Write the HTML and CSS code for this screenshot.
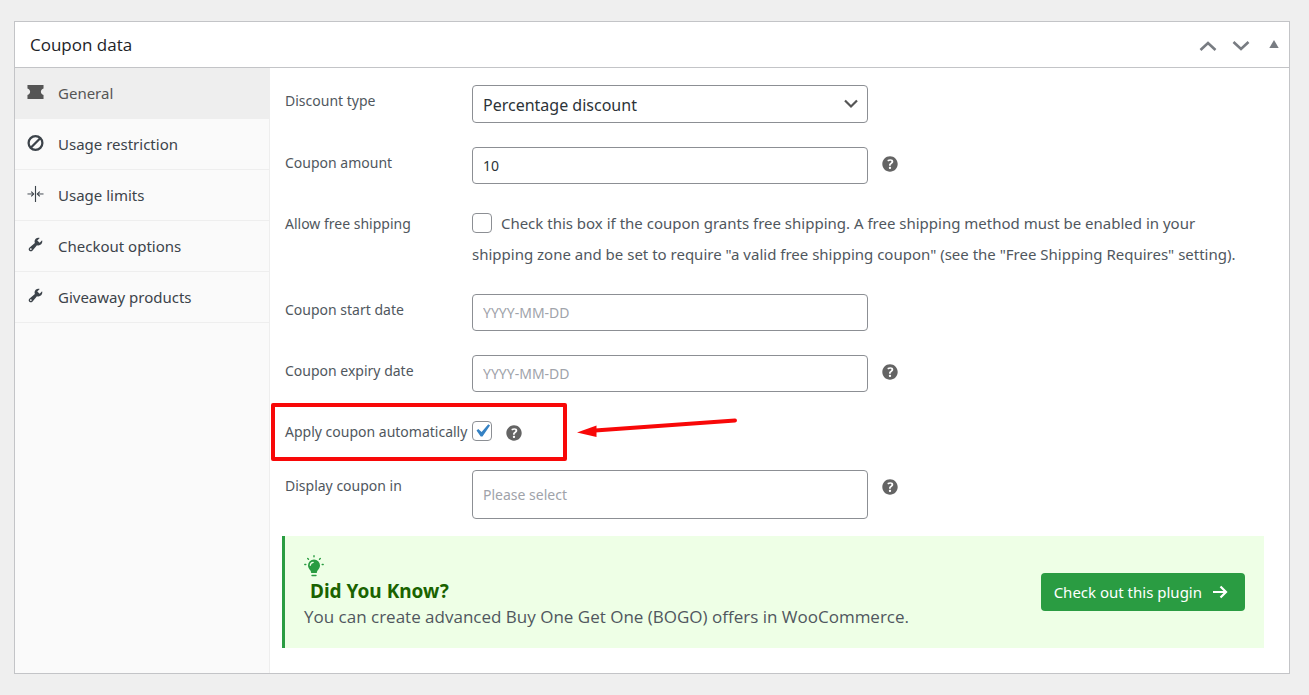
FILE: index.html
```html
<!DOCTYPE html>
<html lang="en">
<head>
  <meta charset="UTF-8">
  <meta name="viewport" content="width=device-width, initial-scale=1.0">
  <title>Coupon data</title>
  <link rel="stylesheet" href="styles.css">
</head>
<body>
  <svg class="sprite" aria-hidden="true">
    <symbol id="help" viewBox="0 0 20 20">
      <path d="M17 10c0-3.87-3.14-7-7-7-3.87 0-7 3.13-7 7s3.13 7 7 7c3.86 0 7-3.13 7-7zm-6.3 1.48H9.14v-.43c0-.38.08-.7.24-.98s.46-.57.88-.89c.41-.29.68-.53.81-.71.14-.18.2-.39.2-.62 0-.25-.09-.44-.28-.58-.19-.13-.45-.19-.79-.19-.58 0-1.25.19-2 .57l-.64-1.28c.87-.49 1.8-.74 2.77-.74.81 0 1.45.2 1.92.58.48.39.71.91.71 1.55 0 .43-.09.8-.29 1.11-.19.32-.57.67-1.11 1.06-.38.28-.61.49-.71.63-.1.15-.15.34-.15.57v.35zm-1.47 2.74c-.18-.17-.27-.42-.27-.73 0-.33.08-.58.26-.75s.43-.25.77-.25c.32 0 .57.09.75.26s.27.42.27.74c0 .3-.09.55-.27.72-.18.18-.43.27-.75.27-.33 0-.58-.09-.76-.26z"/>
    </symbol>
    <symbol id="wrench" viewBox="0 0 20 20">
      <path d="M16.68 9.77c-1.34 1.34-3.3 1.67-4.95.99l-5.41 6.52c-.99.99-2.59.99-3.58 0s-.99-2.59 0-3.57l6.52-5.42c-.68-1.65-.35-3.61.99-4.95 1.28-1.28 3.12-1.62 4.72-1.06l-2.89 2.89 2.82 2.82 2.86-2.87c.53 1.58.18 3.39-1.08 4.65zM3.81 16.21c.4.39 1.04.39 1.43 0 .4-.4.4-1.04 0-1.43-.39-.4-1.03-.4-1.43 0-.39.39-.39 1.03 0 1.43z"/>
    </symbol>
  </svg>

  <div class="postbox">
    <div class="postbox-header">
      <h2>Coupon data</h2>
      <div class="handle-actions">
        <button type="button" aria-label="Move up">
          <svg width="18" height="12" viewBox="0 0 18 12"><path d="M1.500 10L9 3l7.500 7" fill="none" stroke="currentColor" stroke-width="2.600"/></svg>
        </button>
        <button type="button" aria-label="Move down">
          <svg width="18" height="12" viewBox="0 0 18 12"><path d="M1.500 2L9 9l7.500-7" fill="none" stroke="currentColor" stroke-width="2.600"/></svg>
        </button>
        <button class="toggle" type="button" aria-label="Toggle panel">
          <svg width="10" height="14" viewBox="0 0 10 14"><path d="M5 1L9.700 9H.3z" fill="currentColor"/></svg>
        </button>
      </div>
    </div>

    <div class="panel-wrap">
      <ul class="tabs">
        <li class="active">
          <a href="#general">
            <svg class="tab-icon" viewBox="0 0 18 18"><path d="M.5 2h17v3.800c-1.700.5-2.800 1.800-2.800 3.400s1.100 2.900 2.800 3.400V17H.5v-4.400c1.700-.5 2.800-1.800 2.800-3.400S2.200 6.300.5 5.800z"/></svg>
            <span>General</span>
          </a>
        </li>
        <li>
          <a href="#restriction">
            <svg class="tab-icon" viewBox="0 0 18 18"><g fill="none" stroke="currentColor" stroke-width="2.400"><circle cx="9" cy="9.500" r="7.300"/><path d="M4 14.500l10-10"/></g></svg>
            <span>Usage restriction</span>
          </a>
        </li>
        <li>
          <a href="#limits">
            <svg class="tab-icon" viewBox="0 0 18 18"><g fill="none" stroke="currentColor"><path d="M9 1v17" stroke-width="1.200"/><path d="M.5 9.500h6.500M17.500 9.500H11" stroke-width="1"/><path d="M4.500 7L7 9.500 4.500 12M13.500 7L11 9.500l2.500 2.500" stroke-width="1.200"/></g></svg>
            <span>Usage limits</span>
          </a>
        </li>
        <li>
          <a href="#checkout">
            <svg class="tab-icon"><use href="#wrench"/></svg>
            <span>Checkout options</span>
          </a>
        </li>
        <li>
          <a href="#giveaway">
            <svg class="tab-icon"><use href="#wrench"/></svg>
            <span>Giveaway products</span>
          </a>
        </li>
      </ul>

      <form class="options" id="general">
        <div class="field">
          <label for="discount_type">Discount type</label>
          <div class="control">
            <select class="input" id="discount_type">
              <option>Percentage discount</option>
            </select>
          </div>
        </div>
        <div class="field">
          <label for="coupon_amount">Coupon amount</label>
          <div class="control">
            <input class="input" type="text" id="coupon_amount" value="10">
            <svg class="help"><use href="#help"/></svg>
          </div>
        </div>
        <div class="field">
          <label for="free_shipping">Allow free shipping</label>
          <div class="description">
            <input class="checkbox" type="checkbox" id="free_shipping">
            <span>Check this box if the coupon grants free shipping. A free shipping method must be enabled in your shipping zone and be set to require "a valid free shipping coupon" (see the "Free Shipping Requires" setting).</span>
          </div>
        </div>
        <div class="field">
          <label for="start_date">Coupon start date</label>
          <div class="control">
            <input class="input" type="text" id="start_date" placeholder="YYYY-MM-DD">
          </div>
        </div>
        <div class="field">
          <label for="expiry_date">Coupon expiry date</label>
          <div class="control">
            <input class="input" type="text" id="expiry_date" placeholder="YYYY-MM-DD">
            <svg class="help"><use href="#help"/></svg>
          </div>
        </div>
        <div class="field marked">
          <label for="auto_apply">Apply coupon automatically</label>
          <div class="control">
            <input class="checkbox" type="checkbox" id="auto_apply" checked>
            <svg class="help"><use href="#help"/></svg>
          </div>
          <svg class="arrow" width="162" height="24" viewBox="0 0 162 24"><path d="M18 14.500L158 4.500" fill="none" stroke="#f80808" stroke-width="4" stroke-linecap="round"/><path d="M0 16.500L19.500 9.500v11.500z" fill="#f80808"/></svg>
        </div>
        <div class="field">
          <label for="display_in">Display coupon in</label>
          <div class="control">
            <input class="input tall" type="text" id="display_in" placeholder="Please select">
            <svg class="help"><use href="#help"/></svg>
          </div>
        </div>

        <div class="notice">
          <div class="notice-text">
            <svg class="bulb" viewBox="0 0 20 22"><path d="M10 4.500a6 6 0 0 1 6 6c0 2.300-1.400 3.700-2.400 5-.5.700-.6 1.300-.8 2.500H7.200c-.2-1.200-.3-1.800-.8-2.500-1-1.300-2.400-2.700-2.400-5a6 6 0 0 1 6-6z" fill="#2a9c42"/><path d="M6.300 10.300c.2-1.700 1.200-2.800 2.900-3" fill="none" stroke="#eeffe6" stroke-width="1.200" stroke-linecap="round"/><path d="M8 20.500h4M10 .8v1M3.700 3.500l.8.800M16.300 3.500l-.8.800M.8 9.500h1M18.200 9.500h1" fill="none" stroke="#2a9c42" stroke-width="1.400" stroke-linecap="round"/></svg>
            <h3>Did You Know?</h3>
            <p>You can create advanced Buy One Get One (BOGO) offers in WooCommerce.</p>
          </div>
          <a class="plugin-btn" href="#plugin">
            Check out this plugin
            <svg width="16" height="14" viewBox="0 0 16 14"><path d="M1 7h13M8.500 1.500L14 7l-5.500 5.500" fill="none" stroke="currentColor" stroke-width="2.200"/></svg>
          </a>
        </div>
      </form>
    </div>
  </div>
</body>
</html>
```
FILE: styles.css
```css
* {
  margin: 0;
  padding: 0;
  box-sizing: border-box;
}

body {
  font-family: "Noto Sans", "Open Sans", sans-serif;
  font-size: 15px;
  color: #50575e;
  background-color: #efefef;
  padding: 21px 19px 21px 14px;
}

.sprite {
  display: none;
}

.postbox {
  background-color: #fff;
  border: 1px solid #c3c4c7;
}

.postbox-header {
  display: flex;
  justify-content: space-between;
  align-items: center;
  height: 46px;
  padding: 0 10px 0 15px;
  border-bottom: 1px solid #c3c4c7;
}

.postbox-header h2 {
  font-family: "Open Sans", sans-serif;
  font-size: 17px;
  font-weight: 400;
  color: #1d2327;
}

.handle-actions {
  display: flex;
  align-items: center;
  gap: 15px;
  padding-top: 3px;
  color: #787c82;
}

.handle-actions button {
  display: flex;
  background: none;
  border: none;
  color: inherit;
  cursor: pointer;
}

.handle-actions .toggle {
  margin-left: 4px;
}

.panel-wrap {
  display: flex;
}

.tabs {
  flex: 0 0 255px;
  list-style: none;
  background-color: #fafafa;
  border-right: 1px solid #eee;
}

.tabs a {
  display: flex;
  align-items: center;
  gap: 14px;
  height: 51px;
  padding-left: 12px;
  border-bottom: 1px solid #eee;
  color: #3c434a;
  text-decoration: none;
}

.tabs .active a {
  background-color: #eee;
  color: #555;
}

.tab-icon {
  width: 17px;
  height: 17px;
  margin-bottom: 4px;
  fill: currentColor;
}

.options {
  flex: 1;
  min-width: 0;
  padding: 17px 25px 25px 12px;
}

.field {
  display: grid;
  grid-template-columns: 187px 1fr;
  margin: 0 0 24px 3px;
}

.field label {
  font-size: 14px;
  line-height: 31px;
  white-space: nowrap;
}

.control {
  display: flex;
  align-items: flex-start;
  gap: 11px;
}

.input {
  width: 396px;
  height: 37px;
  padding: 0 10px;
  font-family: inherit;
  font-size: 14px;
  color: #2c3338;
  background-color: #fff;
  border: 1px solid #8c8f94;
  border-radius: 4px;
}

.input::placeholder {
  color: #a0a3aa;
}

select.input {
  height: 38px;
  padding-top: 2px;
  font-size: 16px;
  appearance: none;
  background: #fff url("data:image/svg+xml,%3Csvg xmlns='http://www.w3.org/2000/svg' width='14' height='10' viewBox='0 0 14 10'%3E%3Cpath d='M1 1.500l6 6 6-6' fill='none' stroke='%23555' stroke-width='2.200'/%3E%3C/svg%3E") no-repeat right 9px center;
}

.input.tall {
  height: 49px;
}

.help {
  width: 22px;
  height: 22px;
  margin-top: 6px;
  fill: #646464;
}

.checkbox {
  width: 20px;
  height: 20px;
  appearance: none;
  background-color: #fff;
  border: 1px solid #8c8f94;
  border-radius: 4px;
}

.checkbox:checked {
  background: #fff url("data:image/svg+xml,%3Csvg xmlns='http://www.w3.org/2000/svg' viewBox='0 0 20 20'%3E%3Cpath d='M14.830 4.890l1.340.94-5.810 8.380H9.020L5.780 9.670l1.340-1.250 2.570 2.400z' fill='%233582c4'/%3E%3C/svg%3E") no-repeat center / 26px;
}

.control .checkbox {
  margin-top: 5px;
}

.description {
  padding-right: 8px;
  line-height: 31px;
}

.description .checkbox {
  margin-right: 5px;
  vertical-align: -4px;
}

/* red frame and arrow around the auto apply option */
.marked {
  position: relative;
  margin-bottom: 23px;
}

.marked::before {
  content: "";
  position: absolute;
  top: -13px;
  left: -14px;
  box-sizing: border-box;
  width: 296px;
  height: 58px;
  border: 4px solid #f80808;
  border-radius: 2px;
  pointer-events: none;
}

.arrow {
  position: absolute;
  top: 0;
  left: 292px;
}

.notice {
  display: flex;
  justify-content: space-between;
  align-items: center;
  margin-top: -7px;
  padding: 19px;
  background-color: #eeffe6;
  border-left: 3px solid #2a9c42;
}

.bulb {
  display: block;
  width: 20px;
  height: 22px;
}

.notice h3 {
  padding-left: 6px;
  font-size: 19px;
  line-height: 28px;
  color: #1a6300;
}

.notice p {
  font-family: "Open Sans", sans-serif;
  font-size: 17px;
  line-height: 24px;
}

.plugin-btn {
  display: flex;
  align-items: center;
  gap: 10px;
  height: 38px;
  padding: 0 17px 0 13px;
  font-size: 15px;
  color: #fff;
  background-color: #2a9c42;
  border-radius: 4px;
  text-decoration: none;
  white-space: nowrap;
}
```
